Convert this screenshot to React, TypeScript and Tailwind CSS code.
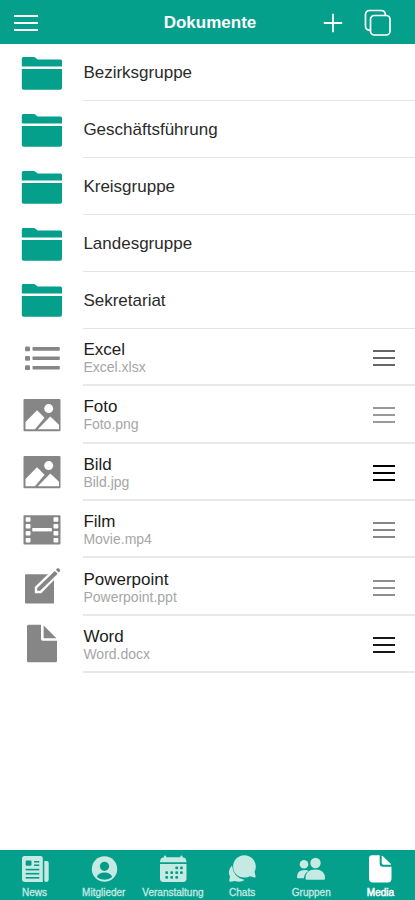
import type { ReactNode } from "react";

const folders = ["Bezirksgruppe", "Geschäftsführung", "Kreisgruppe", "Landesgruppe", "Sekretariat"];

const files = [
  { title: "Excel", name: "Excel.xlsx", icon: <ListIcon />, handle: "text-[#666666]" },
  { title: "Foto", name: "Foto.png", icon: <ImageIcon />, handle: "text-[#999999]" },
  { title: "Bild", name: "Bild.jpg", icon: <ImageIcon />, handle: "text-black" },
  { title: "Film", name: "Movie.mp4", icon: <FilmIcon />, handle: "text-[#868686]" },
  { title: "Powerpoint", name: "Powerpoint.ppt", icon: <EditIcon />, handle: "text-[#8e8e8e]" },
  { title: "Word", name: "Word.docx", icon: <FileIcon />, handle: "text-[#181818]" },
];

const tabs = [
  { label: "News", icon: <NewsIcon /> },
  { label: "Mitglieder", icon: <MemberIcon /> },
  { label: "Veranstaltung", icon: <CalendarIcon /> },
  { label: "Chats", icon: <ChatIcon /> },
  { label: "Gruppen", icon: <GroupIcon /> },
  { label: "Media", icon: <MediaIcon />, active: true },
];

/* Row icons share a 42px box */
function RowSvg({ children }: { children: ReactNode }) {
  return (
    <svg width="42" height="42" viewBox="0 0 42 42" fill="currentColor">
      {children}
    </svg>
  );
}

function FolderIcon() {
  return (
    <RowSvg>
      <path d="M.8 14.500V6.500Q.8 5 2.300 5h10.500q1 0 1.800.7l1.400 1.300q.7.6 1.700.6h21.800q1.500 0 1.500 1.500v5.400z" />
      <path d="M.8 17h40.200v18.900q0 1.800-1.800 1.800H2.600q-1.800 0-1.800-1.800z" />
    </RowSvg>
  );
}

function ListIcon() {
  return (
    <RowSvg>
      {[11.9, 21.3, 30.7].map((y) => (
        <g key={y}>
          <rect x="4" y={y - 2.4} width="5" height="4.800" rx="1.200" />
          <rect x="11.500" y={y - 1.8} width="27.300" height="3.600" rx=".8" />
        </g>
      ))}
    </RowSvg>
  );
}

function ImageIcon() {
  return (
    <RowSvg>
      <rect x="2.500" y="5" width="37" height="32.200" rx="1" />
      <g fill="white">
        <circle cx="27.700" cy="14.600" r="4.500" />
        <path d="M4.500 28 16 16.300l7.600 7.500L14 35.200H4.500z" />
        <path d="M16.800 35.200 29.300 22.400l8.700 8.300v4.500z" />
      </g>
    </RowSvg>
  );
}

function FilmIcon() {
  return (
    <RowSvg>
      <rect x="2.500" y="6.300" width="37" height="29.200" rx=".8" />
      <g fill="white">
        {[8.3, 15.1, 22, 28.9].map((y) => (
          <g key={y}>
            <rect x="4.700" y={y} width="4.800" height="4.500" rx=".8" />
            <rect x="32.500" y={y} width="4.800" height="4.500" rx=".8" />
          </g>
        ))}
        <rect x="11.300" y="19" width="19.500" height="3.400" />
      </g>
    </RowSvg>
  );
}

function EditIcon() {
  return (
    <RowSvg>
      <path d="M4 9q0-.8.800-.8H33v28.500q0 .8-.8.8H4.800q-.8 0-.8-.8z" />
      <path d="M13.800 27.200v-6.200L34.500 1l5.700 5.700-20 20.500z" fill="white" />
      <path d="M16.200 24.800v-2.900L33.800 4.900l2.900 2.900L19.100 24.800z" />
      <path d="m34.800 3.800 1.300-1.300q.9-.9 1.800 0l1 1q.9.900 0 1.800l-1.300 1.300z" />
    </RowSvg>
  );
}

function FileIcon() {
  return (
    <RowSvg>
      <path d="M7.500 1.800H20V16q0 1.700 1.700 1.700H36v20q0 1.500-1.500 1.500h-27Q6 39.200 6 37.700V3.300q0-1.500 1.500-1.500z" />
      <path d="M22.600 2.500v12.700H35.500z" />
    </RowSvg>
  );
}

function Handle({ className }: { className: string }) {
  return (
    <svg width="22" height="18" viewBox="0 0 22 18" stroke="currentColor" strokeWidth="2.200" className={className}>
      <path d="M0 2h22M0 9h22M0 16h22" />
    </svg>
  );
}

/* Tab icons share a 30px box */
function TabSvg({ children }: { children: ReactNode }) {
  return (
    <svg width="30" height="30" viewBox="0 0 30 30" fill="currentColor">
      {children}
    </svg>
  );
}

function NewsIcon() {
  return (
    <TabSvg>
      <path d="M4.500 2h16q2.300 0 2.300 2.300V28H5q-3 0-3-3V4.500Q2 2 4.500 2z" />
      <path d="M24.300 7h2.400q2 0 2 2v16q0 3-2.700 3-1.700 0-1.700-2z" />
      <g className="fill-[#049c88]">
        <rect x="5.700" y="6.500" width="5.800" height="5.200" rx="1" />
        <rect x="14" y="7" width="5.300" height="1.500" />
        <rect x="14" y="10.500" width="5.300" height="1.500" />
        <rect x="5.700" y="14.800" width="13.600" height="1.600" />
        <rect x="5.700" y="18.900" width="13.600" height="1.600" />
        <rect x="5.700" y="23" width="13.600" height="1.600" />
      </g>
    </TabSvg>
  );
}

function MemberIcon() {
  return (
    <TabSvg>
      <circle cx="15.500" cy="15" r="12.700" />
      <g className="fill-[#049c88]">
        <circle cx="15.500" cy="12.300" r="4.600" />
        <path d="M7.800 23q1.500-4.600 7.700-4.600t7.700 4.600q-3 2.700-7.700 2.700T7.800 23z" />
      </g>
    </TabSvg>
  );
}

const days = [
  [17.3, 12.5],
  [22, 12.5],
  [7.3, 17.2],
  [12.3, 17.2],
  [17.3, 17.2],
  [22, 17.2],
  [7.3, 22],
  [12.3, 22],
  [17.3, 22],
];

function CalendarIcon() {
  return (
    <TabSvg>
      <path d="M2 8.300q0-4.800 4-5V2.500q0-1 1.100-1t1.100 1v.8h14.100v-.8q0-1 1.100-1t1.100 1v.8q4 .2 4 5z" />
      <path d="M2 10h26.500v14.500q0 3.500-3.500 3.500H5.500Q2 28 2 24.500z" />
      <g className="fill-[#049c88]">
        {days.map(([x, y]) => (
          <rect key={`${x}-${y}`} x={x} y={y} width="2.800" height="2.800" rx="1" />
        ))}
      </g>
    </TabSvg>
  );
}

function ChatIcon() {
  return (
    <TabSvg>
      <path d="M5 11.500q-5 5.200-2 11l-.8 4q-.1 1.600 1.500 1.300l4-.9q5.300 2 10-.8Q6.500 24 5 11.500z" />
      <path d="M17.300 1.300c6.500 0 11.500 5 11.500 11.300 0 2.500-.8 4.300-1.200 5.200l1 4.700q.2 1.200-1 1l-4.500-1.300c-1.800.9-3.500 1.400-5.800 1.400-6.500 0-11.200-4.700-11.200-11S11 1.300 17.300 1.300z" />
    </TabSvg>
  );
}

function GroupIcon() {
  return (
    <TabSvg>
      <circle cx="8" cy="10.300" r="4.300" />
      <circle cx="19.500" cy="9" r="5.200" />
      <path d="M1 23.300q0-7.300 7.500-7.300 2.500 0 4.200 1-4.500 2.300-4.800 7.300H2q-1 0-1-1z" />
      <path d="M9.500 24.500Q9.500 15.500 19.300 15.500T29 24.500q0 1.200-1.200 1.200H10.700q-1.200 0-1.200-1.200z" />
    </TabSvg>
  );
}

function MediaIcon() {
  return (
    <TabSvg>
      <path d="M7 1.200h7.700v8.300q0 3.300 3.300 3.300h8.500V24.500q0 4-4 4H8q-4 0-4-4v-20Q4 1.200 7 1.200z" />
      <path d="M16.700 1.800q.9.200 1.700 1l6.800 6.400q.7.700.9 1.600h-7.600q-1.800 0-1.800-1.800z" />
    </TabSvg>
  );
}

export default function App() {
  return (
    <div className="flex h-[900px] w-[415px] flex-col bg-white font-['Liberation_Sans',Arial,sans-serif]">
      <header className="grid h-11 shrink-0 grid-cols-[1fr_auto_1fr] items-center bg-[#05a08c] text-white">
        <svg width="24" height="18" viewBox="0 0 24 18" stroke="currentColor" strokeWidth="2" className="ml-[13.500px] mt-0.5">
          <path d="M0 2h24M0 9h24M0 16h24" />
        </svg>
        <h1 className="pl-[5px] pt-0.5 text-[17px] font-bold leading-5">Dokumente</h1>
        <div className="flex items-center justify-end gap-[21px] pr-6">
          <svg width="20" height="20" viewBox="0 0 20 20" stroke="currentColor" strokeWidth="1.800" className="mt-0.5">
            <path d="M10 .8v18.400M.8 10h18.400" />
          </svg>
          <svg width="27" height="27" viewBox="0 0 27 27" fill="none" stroke="currentColor" strokeWidth="1.700">
            <rect x="6.500" y="6.500" width="19.500" height="19.500" rx="3.800" />
            <path d="M6.500 21.300H5.800q-4.300 0-4.300-4.300V5.800q0-4.300 4.300-4.300H17q4.300 0 4.300 4.300v.7" />
          </svg>
        </div>
      </header>

      <main className="flex-1 pt-[0.600px]">
        {folders.map((folder) => (
          <div key={folder} className="flex h-[56.850px] items-center">
            <div className="w-[83px] pl-[21px] text-[#05a08c]">
              <FolderIcon />
            </div>
            <div className="flex h-full flex-1 items-center border-b border-[#e4e4e4] pt-px pl-[0.400px] text-[17px] text-[#2b2b2b]">
              {folder}
            </div>
          </div>
        ))}

        {files.map((file) => (
          <div key={file.name} className="flex h-[57.400px] items-center">
            <div className="w-[83px] pl-[21px] text-[#868686]">{file.icon}</div>
            <div className="flex h-full flex-1 items-center justify-between border-b-2 border-[#e8e8e8] pt-[3px] pr-5">
              <div className="pl-[0.400px]">
                <div className="text-[17px] leading-[19px] text-[#1c1c1c]">{file.title}</div>
                <div className="text-[14px] leading-[17px] text-[#a6a6a6]">{file.name}</div>
              </div>
              <Handle className={file.handle} />
            </div>
          </div>
        ))}
      </main>

      <nav className="flex h-[50px] shrink-0 bg-[#05a08c]">
        {tabs.map((tab) => (
          <div
            key={tab.label}
            className={`flex flex-1 basis-0 flex-col items-center pt-1 ${tab.active ? "text-white" : "text-[#c5e9e3]"}`}
          >
            {tab.icon}
            <span
              className={`mt-[3px] text-[10px] leading-3 ${tab.active ? "[-webkit-text-stroke:0.5px]" : "[-webkit-text-stroke:0.3px]"}`}
            >
              {tab.label}
            </span>
          </div>
        ))}
      </nav>
    </div>
  );
}
